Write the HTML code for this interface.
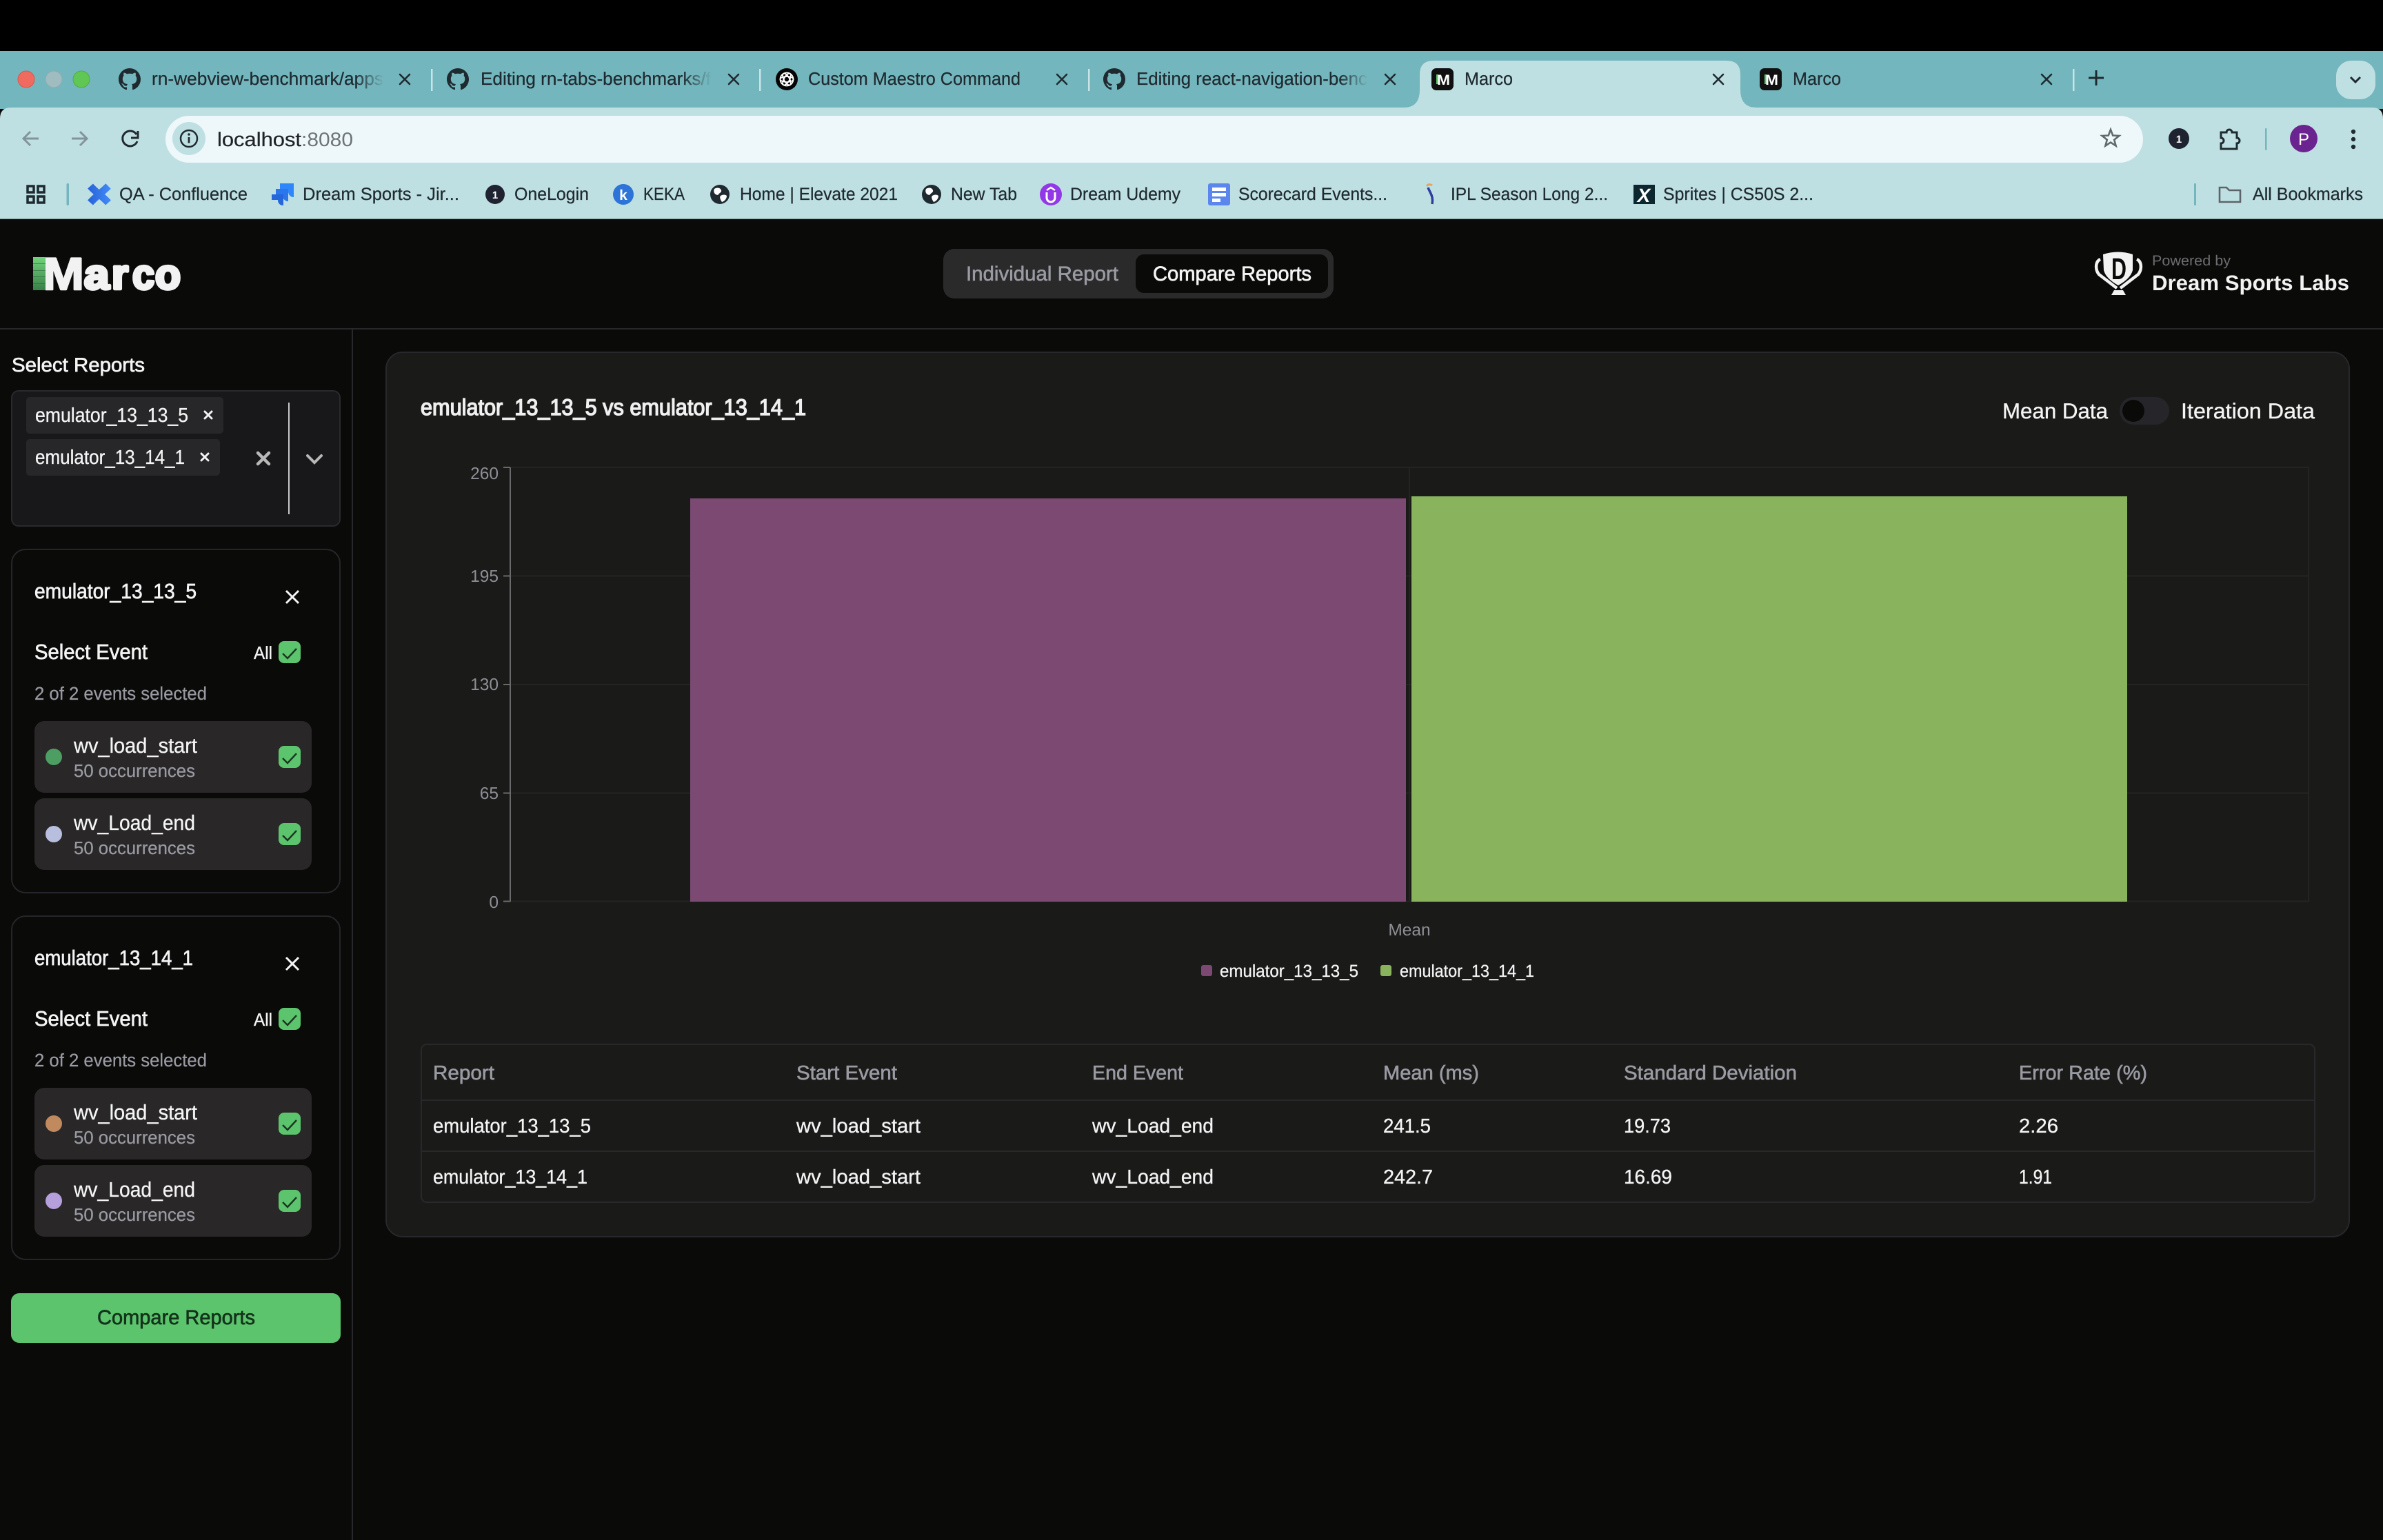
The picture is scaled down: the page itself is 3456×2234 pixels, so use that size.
<!DOCTYPE html>
<html lang="en">
<head>
<meta charset="utf-8">
<title>Marco</title>
<style>
html,body{margin:0;padding:0;background:#0a0a09;width:3456px;height:2234px;overflow:hidden}
svg{display:block;font-family:"Liberation Sans",sans-serif;text-rendering:geometricPrecision}
.tab{font-size:26px;fill:#1f2a30;stroke:#1f2a30;stroke-width:.25px}
.bm{font-size:25.5px;fill:#1f2a30;stroke:#1f2a30;stroke-width:.25px}
.w{fill:#f4f4f5;stroke:#f4f4f5;stroke-width:.35px}
.g{fill:#9a9aa3;stroke:#9a9aa3;stroke-width:.25px}
.mw{fill:#f4f4f5;stroke:#f4f4f5;stroke-width:.7px}
.mg{fill:#9a9aa3;stroke:#9a9aa3;stroke-width:.6px}
.ax{font-size:24.5px;fill:#8e8e96}
.x{stroke-linecap:round;fill:none}
.lg{font-weight:700;fill:#f2f2f2;stroke:#f2f2f2;stroke-linejoin:round}
</style>
</head>
<body>
<svg xmlns="http://www.w3.org/2000/svg" width="3456" height="2234" viewBox="0 0 3456 2234">
<defs>
<linearGradient id="lg" x1="0" y1="0" x2="0" y2="1"><stop offset="0" stop-color="#70d47b"/><stop offset="1" stop-color="#3b7f49"/></linearGradient>
<linearGradient id="fade" x1="0" y1="0" x2="1" y2="0"><stop offset="0" stop-color="#74b6bd" stop-opacity="0"/><stop offset="1" stop-color="#74b6bd"/></linearGradient>
<linearGradient id="conf" x1="0" y1="0" x2="1" y2="0"><stop offset="0" stop-color="#2a66dc"/><stop offset="1" stop-color="#3f86f5"/></linearGradient>
<path id="gh" d="M8 0C3.58 0 0 3.58 0 8c0 3.54 2.29 6.53 5.47 7.59.4.07.55-.17.55-.38 0-.19-.01-.82-.01-1.49-2.01.37-2.53-.49-2.69-.94-.09-.23-.48-.94-.82-1.13-.28-.15-.68-.52-.01-.53.63-.01 1.08.58 1.23.82.72 1.21 1.87.87 2.33.66.07-.52.28-.87.51-1.07-1.78-.2-3.64-.89-3.64-3.95 0-.87.31-1.59.82-2.15-.08-.2-.36-1.02.08-2.12 0 0 .67-.21 2.2.82.64-.18 1.32-.27 2-.27.68 0 1.36.09 2 .27 1.53-1.04 2.2-.82 2.2-.82.44 1.1.16 1.92.08 2.12.51.56.82 1.27.82 2.15 0 3.07-1.87 3.75-3.65 3.95.29.25.54.73.54 1.48 0 1.07-.01 1.93-.01 2.2 0 .21.15.46.55.38A8.013 8.013 0 0016 8c0-4.42-3.58-8-8-8z" fill="#1f2a30"/>
<g id="chk"><rect width="32" height="32" rx="8" fill="#5cc46c"/><path d="M6 18l7 7 13-14" fill="none" stroke="#1b3522" stroke-width="2.4"/></g>
<g id="globe"><circle cx="14" cy="14" r="14" fill="#1f2a30"/><path d="M6 6c5-3 9-1 10 2s-3 4-4 6-5 0-6-2-1-4 0-6zM15 16c3-2 7-2 9 0 0 4-3 8-7 9-2-3-4-7-2-9z" fill="#fff"/></g>
<g id="mfav"><rect width="32" height="32" rx="7" fill="#101010"/><rect x="7" y="9" width="3" height="14" fill="#5cc46c"/><text x="8" y="24" font-size="21" font-weight="700" fill="#fff" textLength="19" lengthAdjust="spacingAndGlyphs">M</text></g>
</defs>

<!-- page -->
<rect width="3456" height="2234" fill="#0a0a09"/>
<rect width="3456" height="74" fill="#000"/>

<!-- tab strip -->
<rect y="74" width="3456" height="84" fill="#74b6bd"/>
<circle cx="38" cy="115" r="12" fill="#f06b5f" stroke="#d5584d" stroke-width="1"/>
<circle cx="78" cy="115" r="12" fill="#9fbcc1" stroke="#8eaab0" stroke-width="1"/>
<circle cx="118" cy="115" r="12" fill="#60c654" stroke="#4fae45" stroke-width="1"/>

<!-- toolbar -->
<path d="M0 318V172Q0 156 16 156H3440Q3456 156 3456 172V318Z" fill="#bfe0e2"/>
<rect y="316" width="3456" height="2" fill="#a3bcbe"/>
<path d="M2036 156Q2059 156 2059 130V108Q2059 88 2079 88H2504Q2524 88 2524 108V130Q2524 156 2547 156Z" fill="#bfe0e2"/>

<!-- tabs -->
<g transform="translate(172,99) scale(2)"><use href="#gh"/></g>
<text class="tab" x="220" y="123" textLength="336" lengthAdjust="spacingAndGlyphs">rn-webview-benchmark/apps</text>
<rect x="515" y="95" width="42" height="40" fill="url(#fade)"/>
<path class="x" d="M580 108l14 14M594 108l-14 14" stroke="#1f2a30" stroke-width="2.6"/>
<rect x="625" y="100" width="2.5" height="32" fill="#c9e4e6"/>
<g transform="translate(648,99) scale(2)"><use href="#gh"/></g>
<text class="tab" x="697" y="123" textLength="334" lengthAdjust="spacingAndGlyphs">Editing rn-tabs-benchmarks/f</text>
<rect x="990" y="95" width="42" height="40" fill="url(#fade)"/>
<path class="x" d="M1057 108l14 14M1071 108l-14 14" stroke="#1f2a30" stroke-width="2.6"/>
<rect x="1101" y="100" width="2.5" height="32" fill="#c9e4e6"/>
<circle cx="1141" cy="115" r="16" fill="#050505"/>
<g fill="none" stroke="#fff" stroke-width="1.8"><circle cx="1141" cy="115" r="9.5"/><ellipse cx="1141" cy="115" rx="4" ry="9.5" transform="rotate(30 1141 115)"/><ellipse cx="1141" cy="115" rx="4" ry="9.5" transform="rotate(-30 1141 115)"/><ellipse cx="1141" cy="115" rx="4" ry="9.5" transform="rotate(90 1141 115)"/></g>
<text class="tab" x="1172" y="123" textLength="308" lengthAdjust="spacingAndGlyphs">Custom Maestro Command</text>
<path class="x" d="M1533 108l14 14M1547 108l-14 14" stroke="#1f2a30" stroke-width="2.6"/>
<rect x="1578" y="100" width="2.5" height="32" fill="#c9e4e6"/>
<g transform="translate(1600,99) scale(2)"><use href="#gh"/></g>
<text class="tab" x="1648" y="123" textLength="335" lengthAdjust="spacingAndGlyphs">Editing react-navigation-benc</text>
<rect x="1942" y="95" width="42" height="40" fill="url(#fade)"/>
<path class="x" d="M2009 108l14 14M2023 108l-14 14" stroke="#1f2a30" stroke-width="2.6"/>
<use href="#mfav" x="2076" y="99"/>
<text class="tab" x="2124" y="123" textLength="70" lengthAdjust="spacingAndGlyphs">Marco</text>
<path class="x" d="M2485 108l14 14M2499 108l-14 14" stroke="#1f2a30" stroke-width="2.6"/>
<use href="#mfav" x="2552" y="99"/>
<text class="tab" x="2600" y="123" textLength="70" lengthAdjust="spacingAndGlyphs">Marco</text>
<path class="x" d="M2961 108l14 14M2975 108l-14 14" stroke="#1f2a30" stroke-width="2.6"/>
<rect x="3006" y="100" width="2.5" height="32" fill="#c9e4e6"/>
<path d="M3029 113h22M3040 102v22" stroke="#1f2a30" stroke-width="3" fill="none"/>
<rect x="3388" y="88" width="57" height="56" rx="22" fill="#bfe0e2"/>
<path d="M3409 112l7 7 7-7" fill="none" stroke="#1f2a30" stroke-width="3"/>

<!-- omnibox row -->
<path d="M56 201H34M44 191L34 201L44 211" fill="none" stroke="#83939a" stroke-width="3"/>
<path d="M104 201H126M116 191L126 201L116 211" fill="none" stroke="#83939a" stroke-width="3"/>
<path d="M198 195A11 11 0 1 0 199 205" fill="none" stroke="#1f2a30" stroke-width="3"/>
<path d="M200 190V200H190" fill="none" stroke="#1f2a30" stroke-width="3"/>
<rect x="240" y="168" width="2868" height="68" rx="34" fill="#eef7f9"/>
<circle cx="274" cy="201" r="24" fill="#bfe0e2"/>
<circle cx="274" cy="201" r="12" fill="none" stroke="#1f2a30" stroke-width="2.5"/>
<rect x="272.6" y="199" width="2.8" height="8.5" fill="#1f2a30"/><circle cx="274" cy="195" r="1.8" fill="#1f2a30"/>
<text x="315" y="212" font-size="28.5" fill="#1f2327" stroke="#1f2327" stroke-width=".25" textLength="122" lengthAdjust="spacingAndGlyphs">localhost</text>
<text x="437" y="212" font-size="28.5" fill="#6f7478" textLength="75" lengthAdjust="spacingAndGlyphs">:8080</text>
<polygon points="3061,188 3064.2,196.5 3073.4,197 3066.2,202.7 3068.6,211.5 3061,206.5 3053.4,211.5 3055.8,202.7 3048.6,197 3057.8,196.5" fill="none" stroke="#5f6a6e" stroke-width="2.6"/>
<circle cx="3160" cy="201" r="15" fill="#1f2230"/>
<text x="3160" y="207" font-size="15" font-weight="700" fill="#fff" text-anchor="middle">1</text>
<path d="M3221 192h8a4 4 0 0 1 8 0h7v8a4 4 0 0 1 0 8v8h-23v-8a4 4 0 0 0 0-8z" fill="none" stroke="#1f2a30" stroke-width="3"/>
<rect x="3285" y="186" width="2.5" height="32" rx="1" fill="#74b6bd"/>
<circle cx="3341" cy="201" r="20" fill="#6b2390"/>
<text x="3341" y="210" font-size="24" fill="#fff" text-anchor="middle">P</text>
<circle cx="3413" cy="191" r="3.2" fill="#1f2a30"/><circle cx="3413" cy="202" r="3.2" fill="#1f2a30"/><circle cx="3413" cy="213" r="3.2" fill="#1f2a30"/>

<!-- bookmarks -->
<g fill="none" stroke="#1f2a30" stroke-width="3.5"><rect x="40" y="270" width="9" height="9"/><rect x="55" y="270" width="9" height="9"/><rect x="40" y="285" width="9" height="9"/><rect x="55" y="285" width="9" height="9"/></g>
<rect x="96.5" y="266" width="3.5" height="32" rx="1.5" fill="#74b6bd"/>
<path d="M131 270C140 280 149 285 157 294M157 270C148 279 139 285 131 294" fill="none" stroke="url(#conf)" stroke-width="10.5"/>
<text class="bm" x="173" y="290" textLength="186" lengthAdjust="spacingAndGlyphs">QA - Confluence</text>
<path d="M406 266H426V286C421 286 418 282 418 278H406z" fill="#2f86fb"/>
<path d="M400 274H418V292C413 292 410 288 410 284H400z" fill="#2a76ea"/>
<path d="M394 282H411V298C405 298 403 294 403 290H394z" fill="#2467dc"/>
<text class="bm" x="439" y="290" textLength="227" lengthAdjust="spacingAndGlyphs">Dream Sports - Jir...</text>
<circle cx="718" cy="282" r="14" fill="#1f2230"/>
<text x="718" y="288" font-size="15" font-weight="700" fill="#fff" text-anchor="middle">1</text>
<text class="bm" x="746" y="290" textLength="108" lengthAdjust="spacingAndGlyphs">OneLogin</text>
<circle cx="904" cy="282" r="15" fill="#2c74d8"/>
<text x="904" y="290" font-size="21" font-weight="700" fill="#fff" text-anchor="middle">k</text>
<text class="bm" x="933" y="290" textLength="60" lengthAdjust="spacingAndGlyphs">KEKA</text>
<use href="#globe" x="1030" y="268"/>
<text class="bm" x="1073" y="290" textLength="229" lengthAdjust="spacingAndGlyphs">Home | Elevate 2021</text>
<use href="#globe" x="1337" y="268"/>
<text class="bm" x="1379" y="290" textLength="96" lengthAdjust="spacingAndGlyphs">New Tab</text>
<circle cx="1524" cy="282" r="16" fill="#9238e6"/>
<path d="M1518 279v8a6 6 0 0 0 12 0v-8" fill="none" stroke="#fff" stroke-width="3"/><path d="M1518 276l6-4 6 4" fill="none" stroke="#fff" stroke-width="2.5"/>
<text class="bm" x="1552" y="290" textLength="160" lengthAdjust="spacingAndGlyphs">Dream Udemy</text>
<rect x="1752" y="266" width="32" height="32" rx="3" fill="#5a86ee"/>
<rect x="1758" y="272" width="20" height="5" fill="#fff"/><rect x="1758" y="280" width="20" height="5" fill="#fff"/><rect x="1758" y="288" width="12" height="5" fill="#fff"/>
<text class="bm" x="1796" y="290" textLength="216" lengthAdjust="spacingAndGlyphs">Scorecard Events...</text>
<path d="M2071 272c3 8 8 12 6 24" fill="none" stroke="#2f3f9c" stroke-width="3.5"/><path d="M2069 270c2-3 5-3 8-1" fill="none" stroke="#e8a35a" stroke-width="3"/>
<text class="bm" x="2104" y="290" textLength="228" lengthAdjust="spacingAndGlyphs">IPL Season Long 2...</text>
<rect x="2369" y="268" width="31" height="28" fill="#0d2730"/>
<text x="2384" y="293" font-size="28" font-weight="700" font-style="italic" fill="#fff" text-anchor="middle">X</text>
<text class="bm" x="2412" y="290" textLength="218" lengthAdjust="spacingAndGlyphs">Sprites | CS50S 2...</text>
<rect x="3182" y="266" width="3" height="32" rx="1" fill="#74b6bd"/>
<path d="M3219 272h10l4 4h16v17h-30z" fill="none" stroke="#5d6468" stroke-width="2.6"/>
<text class="bm" x="3267" y="290" textLength="160" lengthAdjust="spacingAndGlyphs">All Bookmarks</text>

<!-- app header -->
<rect y="476" width="3456" height="2" fill="#28282c"/>
<rect x="510" y="477" width="2" height="1757" fill="#28282c"/>
<text class="lg" x="62" y="420" font-size="66" stroke-width="2.5" textLength="60" lengthAdjust="spacingAndGlyphs">M</text>
<rect x="48" y="373" width="18" height="48" fill="url(#lg)"/>
<g fill="#2f5f38" opacity=".55"><rect x="48" y="382" width="18" height="1"/><rect x="48" y="392" width="18" height="1"/><rect x="48" y="401" width="18" height="1"/><rect x="48" y="411" width="18" height="1"/></g>
<text class="lg" x="122" y="419" font-size="61" stroke-width="4.5" textLength="36.5" lengthAdjust="spacingAndGlyphs">a</text>
<text class="lg" x="162" y="419" font-size="61" stroke-width="4.5" textLength="24" lengthAdjust="spacingAndGlyphs">r</text>
<text class="lg" x="192" y="419" font-size="61" stroke-width="4.5" textLength="32" lengthAdjust="spacingAndGlyphs">c</text>
<text class="lg" x="225" y="419" font-size="61" stroke-width="4.5" textLength="37" lengthAdjust="spacingAndGlyphs">o</text>

<rect x="1368" y="361" width="566" height="72" rx="16" fill="#2a2a2b"/>
<rect x="1647" y="369" width="279" height="56" rx="12" fill="#0a0a09"/>
<text class="mg" x="1401" y="407" font-size="29.5" textLength="221" lengthAdjust="spacingAndGlyphs">Individual Report</text>
<text class="mw" x="1672" y="407" font-size="29.5" textLength="230" lengthAdjust="spacingAndGlyphs">Compare Reports</text>

<path d="M3050 369Q3072 362 3093 369L3093 392Q3090 404 3072 414Q3054 404 3051 392Z" fill="#f2f2f2"/>
<path d="M3046 376C3038 380 3039 392 3044 398L3070 418M3099 376C3107 380 3106 392 3101 398L3075 418" fill="none" stroke="#f2f2f2" stroke-width="4.5"/>
<path d="M3062 428L3066 421H3079L3083 428Z" fill="#f2f2f2"/>
<text x="3062" y="405" font-size="44" font-weight="700" fill="#0a0a09" textLength="22" lengthAdjust="spacingAndGlyphs">D</text>
<text x="3121" y="385" font-size="21" fill="#6d6d72" textLength="114" lengthAdjust="spacingAndGlyphs">Powered by</text>
<text x="3121" y="421" font-size="31" font-weight="700" fill="#f2f2f2" textLength="286" lengthAdjust="spacingAndGlyphs">Dream Sports Labs</text>

<!-- sidebar -->
<text class="mw" x="17" y="539" font-size="28.5" textLength="193" lengthAdjust="spacingAndGlyphs">Select Reports</text>
<rect x="17" y="567" width="476" height="196" rx="10" fill="#18181b" stroke="#2a2a2e" stroke-width="2"/>
<rect x="38" y="576" width="286" height="53" rx="5" fill="#272729"/>
<rect x="38" y="637" width="281" height="53" rx="5" fill="#272729"/>
<text class="w" x="51" y="612" font-size="29" textLength="222" lengthAdjust="spacingAndGlyphs">emulator_13_13_5</text>
<text class="w" x="51" y="673" font-size="29" textLength="217" lengthAdjust="spacingAndGlyphs">emulator_13_14_1</text>
<path class="x" d="M297 597l10 10M307 597l-10 10" stroke="#f4f4f5" stroke-width="3"/>
<path class="x" d="M292 658l10 10M302 658l-10 10" stroke="#f4f4f5" stroke-width="3"/>
<path class="x" d="M374 657l16 16M390 657l-16 16" stroke="#b8b8b8" stroke-width="4.5"/>
<rect x="418" y="584" width="2" height="162" fill="#c8c8c8"/>
<path class="x" d="M446 661l10 10 10-10" stroke="#b8b8b8" stroke-width="4"/>

<!-- panel 1 -->
<rect x="17" y="797" width="476" height="498" rx="20" fill="none" stroke="#26262a" stroke-width="2"/>
<text class="mw" x="50" y="868" font-size="30.5" textLength="235" lengthAdjust="spacingAndGlyphs">emulator_13_13_5</text>
<path d="M415 857l18 18M433 857l-18 18" stroke="#f4f4f5" stroke-width="3" fill="none"/>
<text class="mw" x="50" y="956" font-size="30.5" textLength="164" lengthAdjust="spacingAndGlyphs">Select Event</text>
<text class="w" x="368" y="956" font-size="26" textLength="27" lengthAdjust="spacingAndGlyphs">All</text>
<use href="#chk" x="404" y="930"/>
<text class="g" x="50" y="1015" font-size="26.5" textLength="250" lengthAdjust="spacingAndGlyphs">2 of 2 events selected</text>
<rect x="50" y="1046" width="402" height="104" rx="14" fill="#292727"/>
<circle cx="78" cy="1098" r="12" fill="#4d9e62"/>
<text class="w" x="107" y="1092" font-size="30.5" textLength="179" lengthAdjust="spacingAndGlyphs">wv_load_start</text>
<text class="g" x="107" y="1127" font-size="26" textLength="176" lengthAdjust="spacingAndGlyphs">50 occurrences</text>
<use href="#chk" x="404" y="1082"/>
<rect x="50" y="1158" width="402" height="104" rx="14" fill="#292727"/>
<circle cx="78" cy="1210" r="12" fill="#b8bede"/>
<text class="w" x="107" y="1204" font-size="30.5" textLength="176" lengthAdjust="spacingAndGlyphs">wv_Load_end</text>
<text class="g" x="107" y="1239" font-size="26" textLength="176" lengthAdjust="spacingAndGlyphs">50 occurrences</text>
<use href="#chk" x="404" y="1194"/>

<!-- panel 2 -->
<rect x="17" y="1329" width="476" height="498" rx="20" fill="none" stroke="#26262a" stroke-width="2"/>
<text class="mw" x="50" y="1400" font-size="30.5" textLength="230" lengthAdjust="spacingAndGlyphs">emulator_13_14_1</text>
<path d="M415 1389l18 18M433 1389l-18 18" stroke="#f4f4f5" stroke-width="3" fill="none"/>
<text class="mw" x="50" y="1488" font-size="30.5" textLength="164" lengthAdjust="spacingAndGlyphs">Select Event</text>
<text class="w" x="368" y="1488" font-size="26" textLength="27" lengthAdjust="spacingAndGlyphs">All</text>
<use href="#chk" x="404" y="1462"/>
<text class="g" x="50" y="1547" font-size="26.5" textLength="250" lengthAdjust="spacingAndGlyphs">2 of 2 events selected</text>
<rect x="50" y="1578" width="402" height="104" rx="14" fill="#292727"/>
<circle cx="78" cy="1630" r="12" fill="#c08a5e"/>
<text class="w" x="107" y="1624" font-size="30.5" textLength="179" lengthAdjust="spacingAndGlyphs">wv_load_start</text>
<text class="g" x="107" y="1659" font-size="26" textLength="176" lengthAdjust="spacingAndGlyphs">50 occurrences</text>
<use href="#chk" x="404" y="1614"/>
<rect x="50" y="1690" width="402" height="104" rx="14" fill="#292727"/>
<circle cx="78" cy="1742" r="12" fill="#b6a0dc"/>
<text class="w" x="107" y="1736" font-size="30.5" textLength="176" lengthAdjust="spacingAndGlyphs">wv_Load_end</text>
<text class="g" x="107" y="1771" font-size="26" textLength="176" lengthAdjust="spacingAndGlyphs">50 occurrences</text>
<use href="#chk" x="404" y="1726"/>

<!-- compare button -->
<rect x="16" y="1876" width="478" height="72" rx="12" fill="#5cc46c"/>
<text x="141" y="1921" font-size="29.5" fill="#13331b" stroke="#13331b" stroke-width=".7" textLength="229" lengthAdjust="spacingAndGlyphs">Compare Reports</text>

<!-- main card -->
<rect x="560" y="511" width="2847" height="1283" rx="24" fill="#1a1a19" stroke="#28282c" stroke-width="2"/>
<text x="610" y="602" font-size="33" fill="#f0f0f1" stroke="#f0f0f1" stroke-width="1.4" textLength="559" lengthAdjust="spacingAndGlyphs">emulator_13_13_5 vs emulator_13_14_1</text>
<text class="w" x="2904" y="607" font-size="31.5" textLength="153" lengthAdjust="spacingAndGlyphs">Mean Data</text>
<rect x="3074" y="576" width="72" height="40" rx="20" fill="#26262a"/>
<circle cx="3094" cy="596" r="16" fill="#0a0a09"/>
<text class="w" x="3163" y="607" font-size="31.5" textLength="194" lengthAdjust="spacingAndGlyphs">Iteration Data</text>

<!-- chart grid -->
<g fill="#242424">
<rect x="740" y="677" width="2609" height="2"/>
<rect x="740" y="834.5" width="2609" height="2"/>
<rect x="740" y="992" width="2609" height="2"/>
<rect x="740" y="1149.5" width="2609" height="2"/>
<rect x="740" y="1306.5" width="2609" height="2"/>
<rect x="3347" y="677" width="2" height="631"/>
<rect x="2043" y="677" width="2" height="631"/>
</g>
<g fill="#6a6a6a">
<rect x="739" y="678" width="2" height="630"/>
<rect x="730" y="677" width="10" height="2"/>
<rect x="730" y="834.5" width="10" height="2"/>
<rect x="730" y="992" width="10" height="2"/>
<rect x="730" y="1149.5" width="10" height="2"/>
<rect x="730" y="1306.5" width="10" height="2"/>
</g>
<text class="ax" x="723" y="695" text-anchor="end">260</text>
<text class="ax" x="723" y="844" text-anchor="end">195</text>
<text class="ax" x="723" y="1001" text-anchor="end">130</text>
<text class="ax" x="723" y="1159" text-anchor="end">65</text>
<text class="ax" x="723" y="1317" text-anchor="end">0</text>
<rect x="1001" y="723" width="1038" height="585" fill="#7b4972"/>
<rect x="2047" y="720" width="1038" height="588" fill="#89b45d"/>
<text class="ax" x="2044" y="1357" text-anchor="middle">Mean</text>
<rect x="1742" y="1400" width="16" height="16" rx="3" fill="#7b4972"/>
<text x="1769" y="1417" font-size="25" fill="#f4f4f5" stroke="#f4f4f5" stroke-width=".3" textLength="201" lengthAdjust="spacingAndGlyphs">emulator_13_13_5</text>
<rect x="2002" y="1400" width="16" height="16" rx="3" fill="#89b45d"/>
<text x="2030" y="1417" font-size="25" fill="#f4f4f5" stroke="#f4f4f5" stroke-width=".3" textLength="195" lengthAdjust="spacingAndGlyphs">emulator_13_14_1</text>

<!-- table -->
<rect x="611" y="1515" width="2746" height="229" rx="8" fill="none" stroke="#29292d" stroke-width="2"/>
<rect x="611" y="1595" width="2746" height="2" fill="#29292d"/>
<rect x="611" y="1669" width="2746" height="2" fill="#29292d"/>
<g font-size="29">
<text class="mg" x="628" y="1566" textLength="89" lengthAdjust="spacingAndGlyphs">Report</text>
<text class="mg" x="1155" y="1566" textLength="146" lengthAdjust="spacingAndGlyphs">Start Event</text>
<text class="mg" x="1584" y="1566" textLength="132" lengthAdjust="spacingAndGlyphs">End Event</text>
<text class="mg" x="2006" y="1566" textLength="139" lengthAdjust="spacingAndGlyphs">Mean (ms)</text>
<text class="mg" x="2355" y="1566" textLength="251" lengthAdjust="spacingAndGlyphs">Standard Deviation</text>
<text class="mg" x="2928" y="1566" textLength="186" lengthAdjust="spacingAndGlyphs">Error Rate (%)</text>
<text class="w" x="628" y="1643" textLength="229" lengthAdjust="spacingAndGlyphs">emulator_13_13_5</text>
<text class="w" x="1155" y="1643" textLength="180" lengthAdjust="spacingAndGlyphs">wv_load_start</text>
<text class="w" x="1584" y="1643" textLength="176" lengthAdjust="spacingAndGlyphs">wv_Load_end</text>
<text class="w" x="2006" y="1643" textLength="69" lengthAdjust="spacingAndGlyphs">241.5</text>
<text class="w" x="2355" y="1643" textLength="68" lengthAdjust="spacingAndGlyphs">19.73</text>
<text class="w" x="2928" y="1643" textLength="57" lengthAdjust="spacingAndGlyphs">2.26</text>
<text class="w" x="628" y="1717" textLength="224" lengthAdjust="spacingAndGlyphs">emulator_13_14_1</text>
<text class="w" x="1155" y="1717" textLength="180" lengthAdjust="spacingAndGlyphs">wv_load_start</text>
<text class="w" x="1584" y="1717" textLength="176" lengthAdjust="spacingAndGlyphs">wv_Load_end</text>
<text class="w" x="2006" y="1717" textLength="72" lengthAdjust="spacingAndGlyphs">242.7</text>
<text class="w" x="2355" y="1717" textLength="70" lengthAdjust="spacingAndGlyphs">16.69</text>
<text class="w" x="2928" y="1717" textLength="48" lengthAdjust="spacingAndGlyphs">1.91</text>
</g>
</svg>
</body>
</html>
